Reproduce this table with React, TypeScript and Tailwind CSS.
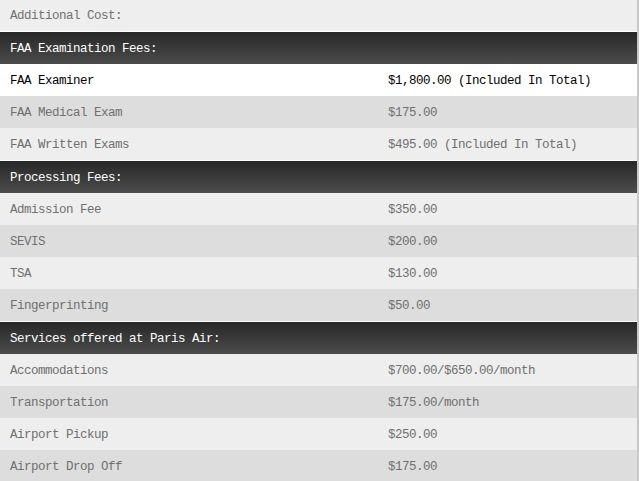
type Row = { label: string, value?: string, kind?: 'head' | 'hi' }

const rows: Row[] = [
  { label: 'Additional Cost:' },
  { label: 'FAA Examination Fees:', kind: 'head' },
  { label: 'FAA Examiner', value: '$1,800.00 (Included In Total)', kind: 'hi' },
  { label: 'FAA Medical Exam', value: '$175.00' },
  { label: 'FAA Written Exams', value: '$495.00 (Included In Total)' },
  { label: 'Processing Fees:', kind: 'head' },
  { label: 'Admission Fee', value: '$350.00' },
  { label: 'SEVIS', value: '$200.00' },
  { label: 'TSA', value: '$130.00' },
  { label: 'Fingerprinting', value: '$50.00' },
  { label: 'Services offered at Paris Air:', kind: 'head' },
  { label: 'Accommodations', value: '$700.00/$650.00/month' },
  { label: 'Transportation', value: '$175.00/month' },
  { label: 'Airport Pickup', value: '$250.00' },
  { label: 'Airport Drop Off', value: '$175.00' },
]

export default function App() {
  // alternate shading restarts after each section header
  let stripe = 0

  return (
    <div
      className="w-[639px] border-r-2 border-[#c8c8c8] bg-white text-[12.5px] tracking-[-0.5px]"
      style={{ fontFamily: '"Liberation Mono", "DejaVu Sans Mono", monospace' }}
    >
      {rows.map((row, i) => {
        if (row.kind === 'head') {
          stripe = 0
          return (
            <div
              key={i}
              className="h-[33px] flex items-center px-[10px] pt-[2px] border-t border-white bg-gradient-to-b from-[#282828] to-[#4c4c4c] text-white"
            >
              {row.label}
            </div>
          )
        }
        let bg = stripe % 2 === 0 ? 'bg-[#eeeeee] text-[#707070]' : 'bg-[#dddddd] text-[#707070]'
        if (row.kind === 'hi') bg = 'bg-white text-black'
        const h = i === 0 ? 'h-[31px]' : 'h-8'
        stripe++
        return (
          <div key={i} className={`${h} grid grid-cols-[378px_1fr] items-center pt-[2px] ${bg}`}>
            <span className="pl-[10px]">{row.label}</span>
            <span className="pl-[10px]">{row.value}</span>
          </div>
        )
      })}
    </div>
  )
}
